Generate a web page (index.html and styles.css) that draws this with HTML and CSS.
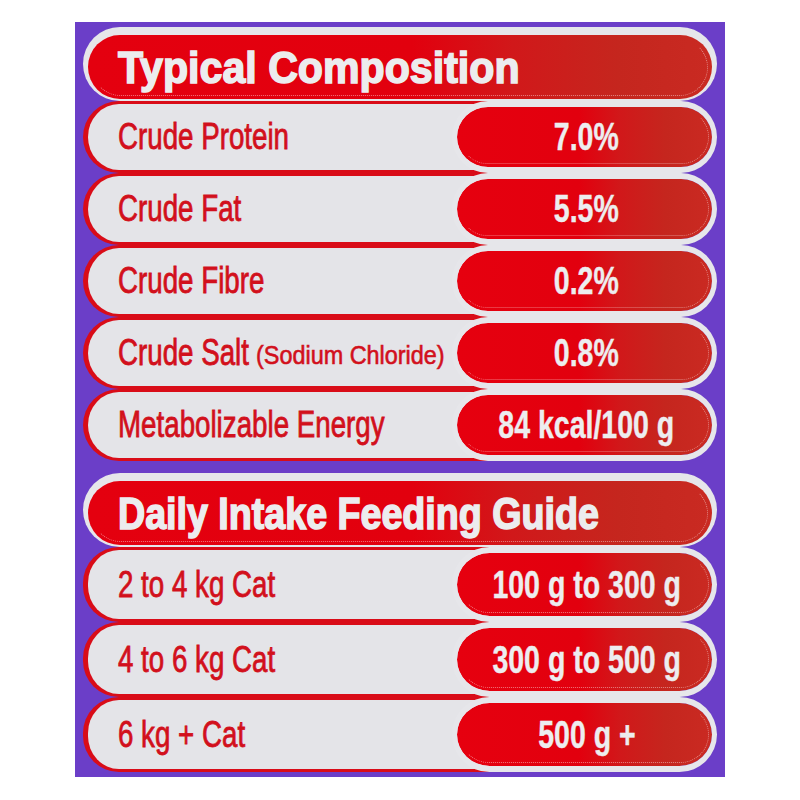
FILE: index.html
```html
<!DOCTYPE html>
<html lang="en">
<head>
<meta charset="utf-8">
<title>Typical Composition</title>
<link rel="stylesheet" href="styles.css">
</head>
<body>
<div class="panel">
  <section class="group">
    <div class="head"><div class="head-inner"><span class="head-text h-typical">Typical Composition</span></div></div>
    <div class="row">
      <div class="label"><span class="label-text">Crude Protein</span></div>
      <div class="value"><span class="value-text">7.0%</span></div>
    </div>
    <div class="row">
      <div class="label"><span class="label-text">Crude Fat</span></div>
      <div class="value"><span class="value-text">5.5%</span></div>
    </div>
    <div class="row">
      <div class="label"><span class="label-text">Crude Fibre</span></div>
      <div class="value"><span class="value-text">0.2%</span></div>
    </div>
    <div class="row">
      <div class="label"><span class="label-text salt">Crude Salt</span><span class="label-small">(Sodium Chloride)</span></div>
      <div class="value"><span class="value-text">0.8%</span></div>
    </div>
    <div class="row">
      <div class="label"><span class="label-text">Metabolizable Energy</span></div>
      <div class="value"><span class="value-text">84 kcal/100 g</span></div>
    </div>
  </section>
  <section class="group">
    <div class="head"><div class="head-inner"><span class="head-text h-daily">Daily Intake Feeding Guide</span></div></div>
    <div class="row row-tall">
      <div class="label"><span class="label-text">2 to 4 kg Cat</span></div>
      <div class="value"><span class="value-text">100 g to 300 g</span></div>
    </div>
    <div class="row row-tall">
      <div class="label"><span class="label-text">4 to 6 kg Cat</span></div>
      <div class="value"><span class="value-text">300 g to 500 g</span></div>
    </div>
    <div class="row row-tall">
      <div class="label"><span class="label-text">6 kg + Cat</span></div>
      <div class="value"><span class="value-text">500 g +</span></div>
    </div>
  </section>
</div>
</body>
</html>
```

FILE: styles.css
```css
html, body {
  margin: 0;
  padding: 0;
  background: #ffffff;
}
body {
  font-family: "Liberation Sans", Arial, sans-serif;
}
.panel {
  margin: 22px 0 0 75px;
  width: 650px;
  height: 755px;
  box-sizing: border-box;
  background: #6b3ec8;
  padding: 5px 8px 0 8px;
  display: flex;
  flex-direction: column;
  gap: 12px;
}
.group {
  display: flex;
  flex-direction: column;
}
.head {
  height: 74px;
  box-sizing: border-box;
  background: #e6e6ea;
  border-radius: 40px;
  padding: 8px 5px 2px 5px;
  position: relative;
  z-index: 2;
}
.head-inner {
  position: relative;
  height: 100%;
  border-radius: 34px;
  background: linear-gradient(90deg, #e4000f 0%, #e2000e 52%, #d1181a 68%, #c5261e 85%, #c92a22 100%);
  display: flex;
  align-items: center;
  padding-left: 30px;
  overflow: hidden;
}
.head-inner::after,
.value::after {
  content: "";
  position: absolute;
  left: 4px;
  right: 4px;
  top: 4px;
  bottom: 3px;
  border: 1.5px dotted rgba(255, 255, 255, 0.45);
  border-top-color: transparent;
  border-left-color: transparent;
  border-radius: 34px;
  pointer-events: none;
}
.head-text {
  display: inline-block;
  white-space: nowrap;
  color: #ececee;
  font-weight: 700;
  font-size: 44px;
  line-height: 1;
  -webkit-text-stroke: 1.6px #ececee;
  transform-origin: left center;
  margin-top: 2px;
}
.h-typical { transform: scaleX(0.935); }
.h-daily { transform: scaleX(0.855); }
.row {
  display: flex;
  height: 72px;
}
.row-tall {
  height: 75px;
}
.label {
  flex: 1;
  margin-right: -40px;
  box-sizing: border-box;
  background: #e4e4e8;
  border: 3px solid #d90c18;
  border-left-width: 5px;
  border-right: none;
  border-radius: 36px 0 0 36px;
  display: flex;
  align-items: center;
  padding-left: 30px;
  white-space: nowrap;
}
.label-text {
  display: inline-block;
  color: #d2101c;
  font-size: 36px;
  line-height: 1;
  -webkit-text-stroke: 0.8px #d2101c;
  transform: scaleX(0.77);
  transform-origin: left center;
}
.label-text.salt {
  margin-right: -32px;
}
.label-small {
  display: inline-block;
  color: #d2101c;
  font-size: 26px;
  line-height: 1;
  -webkit-text-stroke: 0.6px #d2101c;
  margin-top: 4px;
  transform: scaleX(0.9);
  transform-origin: left center;
}
.value {
  position: relative;
  z-index: 1;
  width: 265px;
  box-sizing: border-box;
  border: 6px solid #e6e6ea;
  border-left-width: 5px;
  border-right-width: 5px;
  border-radius: 40px;
  background: linear-gradient(90deg, #e6000f 0%, #e2000e 48%, #d1181a 64%, #c5261e 82%, #ca2a22 100%);
  background-clip: padding-box;
  display: flex;
  align-items: center;
  justify-content: center;
}
.value::after {
  left: 3px;
  right: 3px;
  top: 3px;
  bottom: 3px;
  border-radius: 30px;
}
.value-text {
  display: inline-block;
  white-space: nowrap;
  color: #ededef;
  font-weight: 700;
  font-size: 38px;
  line-height: 1;
  -webkit-text-stroke: 0.4px #ededef;
  transform: scaleX(0.75);
  transform-origin: center center;
  margin-left: 4px;
}
```
